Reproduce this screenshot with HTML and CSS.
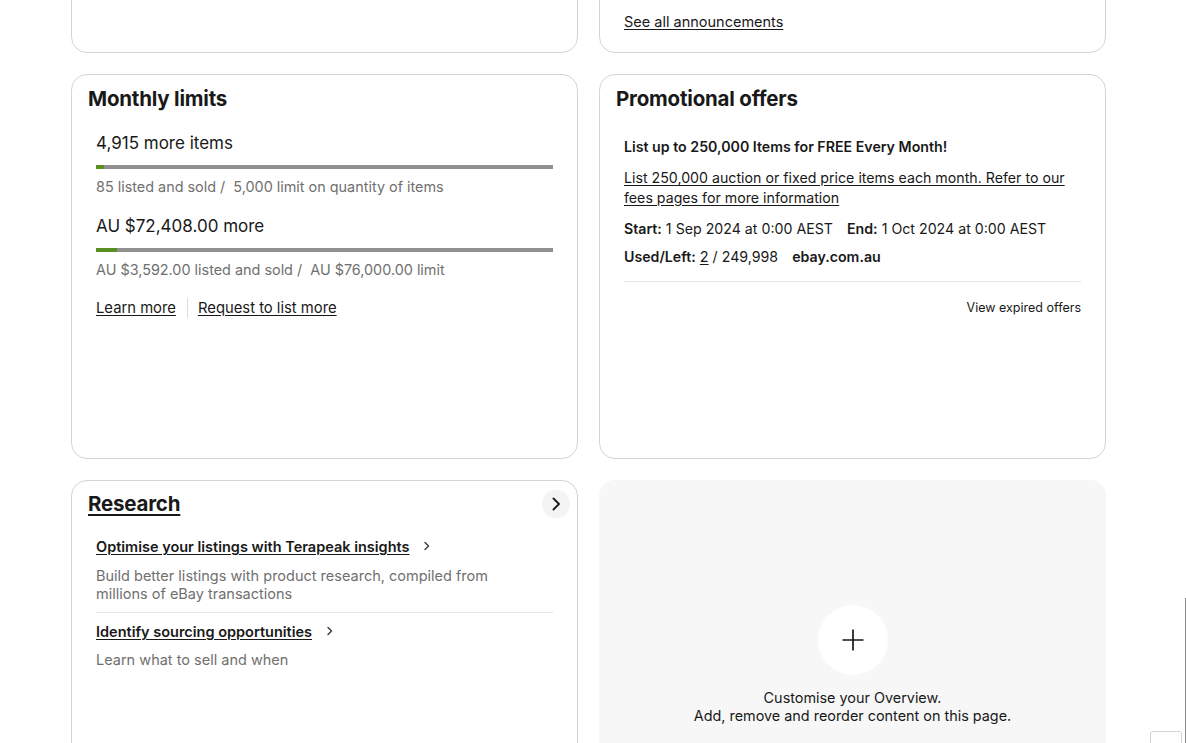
FILE: index.html
```html
<!DOCTYPE html>
<html lang="en">
<head>
    <meta charset="UTF-8">
    <meta name="viewport" content="width=device-width, initial-scale=1.0">
    <title>Seller Hub Overview</title>
    <link rel="stylesheet" href="styles.css">
</head>
<body>
    <div class="overview">
        <div class="grid top-row">
            <div class="card stub"></div>
            <div class="card stub">
                <a href="#" class="link">See all announcements</a>
            </div>
        </div>

        <div class="grid">
            <section class="card">
                <h2 class="card-title">Monthly limits</h2>
                <div class="card-body">
                    <div class="limit">
                        <div class="limit-amount">4,915 more items</div>
                        <div class="bar"><div class="bar-fill" style="width: 1.7%"></div></div>
                        <div class="limit-note">85 listed and sold /&nbsp; 5,000 limit on quantity of items</div>
                    </div>
                    <div class="limit">
                        <div class="limit-amount">AU $72,408.00 more</div>
                        <div class="bar"><div class="bar-fill" style="width: 4.7%"></div></div>
                        <div class="limit-note">AU $3,592.00 listed and sold /&nbsp; AU $76,000.00 limit</div>
                    </div>
                    <div class="limit-links">
                        <a href="#" class="link">Learn more</a>
                        <span class="sep"></span>
                        <a href="#" class="link">Request to list more</a>
                    </div>
                </div>
            </section>

            <section class="card">
                <h2 class="card-title">Promotional offers</h2>
                <div class="card-body promo">
                    <div class="promo-title">List up to 250,000 Items for FREE Every Month!</div>
                    <a href="#" class="link promo-desc">List 250,000 auction or fixed price items each month. Refer to our fees pages for more information</a>
                    <div class="promo-dates">
                        <span><b>Start:</b> 1 Sep 2024 at 0:00 AEST</span>
                        <span><b>End:</b> 1 Oct 2024 at 0:00 AEST</span>
                    </div>
                    <div class="promo-usage">
                        <span><b>Used/Left:</b> <a href="#" class="link">2</a> / 249,998</span>
                        <b>ebay.com.au</b>
                    </div>
                    <div class="promo-footer">
                        <a href="#" class="plain-link">View expired offers</a>
                    </div>
                </div>
            </section>
        </div>

        <div class="grid bottom-row">
            <section class="card">
                <div class="card-head">
                    <h2 class="card-title"><a href="#">Research</a></h2>
                    <button class="round-btn" aria-label="Go to Research">
                        <svg width="16" height="16" viewBox="0 0 16 16"><path d="M5.5 2.5 11 8l-5.5 5.5" fill="none" stroke="#191919" stroke-width="1.8" stroke-linecap="round" stroke-linejoin="round"/></svg>
                    </button>
                </div>
                <div class="card-body">
                    <div class="research-item">
                        <a href="#" class="research-link">Optimise your listings with Terapeak insights</a>
                        <svg class="mini-chevron" width="8" height="10" viewBox="0 0 8 10"><path d="M2 1.5 5.5 5 2 8.5" fill="none" stroke="#3a3a3a" stroke-width="1.4" stroke-linecap="round" stroke-linejoin="round"/></svg>
                        <p class="research-desc">Build better listings with product research, compiled from<br>millions of eBay transactions</p>
                    </div>
                    <div class="research-item">
                        <a href="#" class="research-link">Identify sourcing opportunities</a>
                        <svg class="mini-chevron" width="8" height="10" viewBox="0 0 8 10"><path d="M2 1.5 5.5 5 2 8.5" fill="none" stroke="#3a3a3a" stroke-width="1.4" stroke-linecap="round" stroke-linejoin="round"/></svg>
                        <p class="research-desc">Learn what to sell and when</p>
                    </div>
                </div>
            </section>

            <section class="card customise">
                <button class="add-btn" aria-label="Customise">
                    <svg width="24" height="24" viewBox="0 0 24 24"><path d="M12 1.5v21M1.5 12h21" stroke="#191919" stroke-width="1.7"/></svg>
                </button>
                <p class="customise-text">Customise your Overview.<br>Add, remove and reorder content on this page.</p>
            </section>
        </div>
    </div>

    <div class="edge-line"></div>
    <div class="feedback-tab"></div>
</body>
</html>
```

FILE: styles.css
```css
* {
    margin: 0;
    padding: 0;
    box-sizing: border-box;
}

body {
    font-family: Inter, 'Liberation Sans', sans-serif;
    color: #191919;
    background: #fff;
    overflow: hidden;
    height: 743px;
}

a {
    color: inherit;
}

b {
    font-weight: 600;
}

.overview {
    padding-left: 71px;
}

.grid {
    display: grid;
    grid-template-columns: 507px 507px;
    column-gap: 21px;
    margin-bottom: 21px;
}

.top-row {
    margin-top: -40px;
}

.card {
    border: 1px solid #d4d4d4;
    border-radius: 16px;
    background: #fff;
    height: 385px;
}

.card.stub {
    height: 93px;
    display: flex;
    align-items: flex-end;
    padding: 0 24px 20px;
}

.link {
    color: #191919;
    text-decoration: underline;
    text-underline-offset: 2px;
    font-size: 14.5px;
    line-height: 20px;
}

.card-title {
    font-size: 20.5px;
    font-weight: 700;
    line-height: 28px;
    padding: 10px 16px 0;
    letter-spacing: -0.2px;
}

.card-body {
    padding: 0 24px;
}

/* monthly limits */
.limit {
    margin-top: 18px;
}

.limit + .limit {
    margin-top: 17px;
}

.limit-amount {
    font-size: 17px;
    line-height: 24px;
}

.bar {
    height: 4px;
    background: #909090;
    margin-top: 10px;
}

.bar-fill {
    height: 100%;
    background: #5b8f22;
}

.limit-note {
    color: #707070;
    font-size: 14.4px;
    line-height: 20px;
    margin-top: 8px;
}

.limit-links {
    display: flex;
    align-items: center;
    margin-top: 18px;
}

.limit-links .link {
    font-size: 14.8px;
}

.limit-links .sep {
    width: 1px;
    height: 20px;
    background: #dcdcdc;
    margin: 0 10px 0 11px;
}

/* promotional offers */
.promo {
    font-size: 14.2px;
    line-height: 20px;
}

.promo-title {
    font-weight: 600;
    margin-top: 24px;
}

.promo-desc {
    display: block;
    font-size: 14.2px;
    margin-top: 11px;
}

.promo-dates,
.promo-usage {
    display: flex;
    gap: 14px;
    margin-top: 11px;
}

.promo-usage {
    margin-top: 8px;
}

.promo-footer {
    border-top: 1px solid #e5e5e5;
    margin-top: 14px;
    padding-top: 15px;
    text-align: right;
}

.plain-link {
    color: #191919;
    text-decoration: none;
    font-size: 12.5px;
}

/* research */
.bottom-row .card {
    height: 400px;
}

.card-head {
    display: flex;
    justify-content: space-between;
    align-items: center;
    padding-right: 7px;
}

.card-head .card-title {
    padding-top: 9px;
}

.card-title a {
    text-decoration: underline;
    text-underline-offset: 3px;
}

.round-btn {
    width: 28px;
    height: 28px;
    border-radius: 50%;
    border: none;
    background: #f4f4f4;
    display: flex;
    align-items: center;
    justify-content: center;
    margin-top: 9px;
}

.research-item {
    padding: 18px 0 9px;
    border-bottom: 1px solid #e5e5e5;
}

.research-item + .research-item {
    padding-top: 8px;
    border-bottom: none;
}

.research-link {
    font-size: 14.5px;
    font-weight: 600;
    line-height: 20px;
    text-decoration: underline;
    text-underline-offset: 2px;
}

.mini-chevron {
    margin-left: 9px;
    vertical-align: 1px;
}

.research-desc {
    color: #707070;
    font-size: 14.5px;
    line-height: 18px;
    margin-top: 10px;
}

.research-item + .research-item .research-desc {
    margin-top: 9px;
}

/* customise */
.card.customise {
    border: none;
    background: #f7f7f7;
    display: flex;
    flex-direction: column;
    align-items: center;
    padding-top: 125px;
}

.add-btn {
    width: 70px;
    height: 70px;
    border-radius: 50%;
    border: none;
    background: #fff;
    display: flex;
    align-items: center;
    justify-content: center;
}

.customise-text {
    text-align: center;
    font-size: 14.4px;
    line-height: 18px;
    margin-top: 14px;
}

.edge-line {
    position: fixed;
    right: 0;
    top: 598px;
    bottom: 0;
    width: 1px;
    background: #8a8a8a;
}

.feedback-tab {
    position: fixed;
    right: 4px;
    bottom: -10px;
    width: 32px;
    height: 22px;
    border: 1px solid #d4d4d4;
    border-radius: 3px;
    background: #fff;
}
```
